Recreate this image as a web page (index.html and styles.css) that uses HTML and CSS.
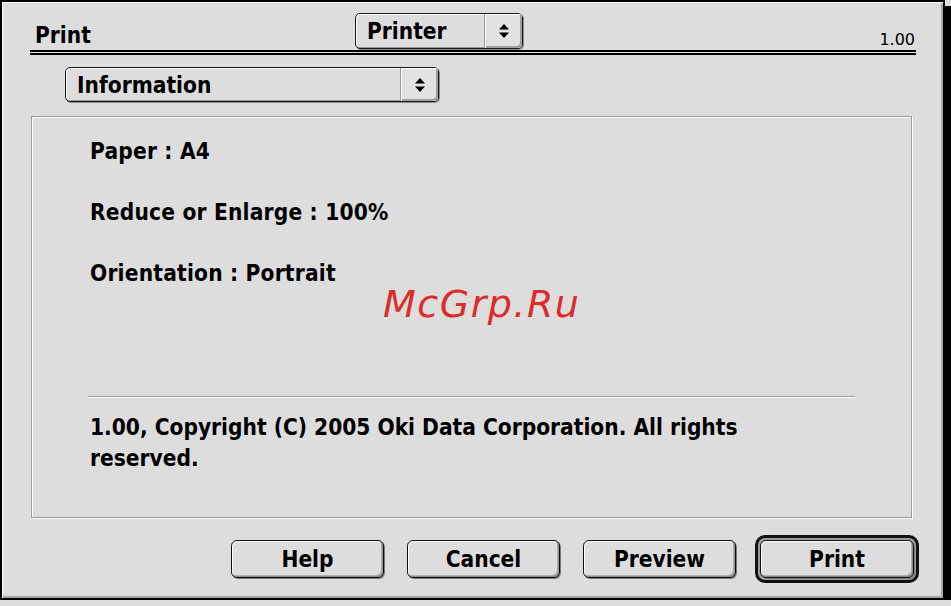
FILE: index.html
```html
<!DOCTYPE html>
<html lang="en">
<head>
    <meta charset="UTF-8">
    <meta name="viewport" content="width=device-width, initial-scale=1.0">
    <title>Print - Information</title>
    <link rel="stylesheet" href="styles.css">
</head>
<body>
    <div class="window">
        <!-- Title row with printer popup -->
        <div class="title-bar">
            <span class="title">Print</span>
            <div class="popup popup-printer">
                <span class="popup-label">Printer</span>
                <span class="popup-arrows">
                    <svg width="10" height="16" viewBox="0 0 10 16"><path d="M0 6.5 L5 1 L10 6.5 Z M0 9.5 L5 15 L10 9.5 Z" fill="#000"/></svg>
                </span>
            </div>
            <span class="version">1.00</span>
        </div>

        <!-- Panel selector -->
        <div class="popup popup-panel">
            <span class="popup-label">Information</span>
            <span class="popup-arrows">
                <svg width="10" height="16" viewBox="0 0 10 16"><path d="M0 6.5 L5 1 L10 6.5 Z M0 9.5 L5 15 L10 9.5 Z" fill="#000"/></svg>
            </span>
        </div>

        <!-- Information group -->
        <div class="group">
            <p class="info-line">Paper : A4</p>
            <p class="info-line">Reduce or Enlarge : 100%</p>
            <p class="info-line">Orientation : Portrait</p>
            <hr class="separator">
            <p class="copyright">1.00, Copyright (C) 2005 Oki Data Corporation. All rights reserved.</p>
        </div>

        <!-- Dialog buttons -->
        <div class="buttons">
            <button class="btn">Help</button>
            <button class="btn">Cancel</button>
            <button class="btn">Preview</button>
            <span class="default-ring"><button class="btn btn-default">Print</button></span>
        </div>

        <div class="watermark">McGrp.Ru</div>
    </div>
</body>
</html>
```

FILE: styles.css
```css
body {
    margin: 0;
    background-color: #dddddd;
    font-family: "DejaVu Sans Condensed", "DejaVu Sans", sans-serif;
    color: #000;
}

.window {
    position: relative;
    box-sizing: border-box;
    width: 945px;
    height: 600px;
    padding: 11px 27px 0 28px;
    background-color: #dddddd;
    border: 2px solid #000;
    box-shadow: 6px 6px 0 #000, inset 1px 1px 0 #fff, inset -2px -2px 0 #a6a6a6;
}

/* title row */
.title-bar {
    display: flex;
    align-items: flex-end;
    height: 37px;
    border-bottom: 2px solid #000;
    box-shadow: 0 1px 0 #dddddd, 0 3px 0 #000;
}

.title {
    width: 320px;
    padding: 0 0 4px 5px;
    font-size: 22.5px;
    font-weight: bold;
    line-height: 1;
}

.version {
    margin-left: auto;
    padding: 0 1px 2px 0;
    font-family: "DejaVu Sans", sans-serif;
    font-size: 16px;
    line-height: 1;
}

/* popup menus */
.popup {
    display: flex;
    box-sizing: border-box;
    background-color: #dddddd;
    border: 1px solid #1a1a1a;
    border-radius: 5px;
    box-shadow: 1px 1px 0 #8a8a8a, inset 1px 1px 0 #fff, inset -1px -1px 0 #9a9a9a;
}

.popup-printer {
    width: 168px;
    height: 36px;
    margin-bottom: 1px;
}

.popup-panel {
    width: 374px;
    height: 35px;
    margin: 15px 0 0 35px;
}

.popup-label {
    flex: 1;
    display: flex;
    align-items: center;
    padding-left: 11px;
    font-size: 22.5px;
    font-weight: bold;
}

.popup-arrows {
    display: flex;
    align-items: center;
    justify-content: center;
    width: 37px;
    border-left: 1px solid #9a9a9a;
    border-radius: 0 4px 4px 0;
    background-color: #e2e2e2;
    box-shadow: inset 1px 1px 0 #fff, inset -2px -2px 0 #a0a0a0;
}

/* group box */
.group {
    box-sizing: border-box;
    width: 881px;
    height: 402px;
    margin: 14px 0 0 1px;
    padding: 23px 0 0 58px;
    border: 1px solid #9a9a9a;
    box-shadow: 1px 1px 0 #fff, inset 1px 1px 0 #fff;
}

.info-line {
    margin: 0 0 39px;
    font-size: 22.5px;
    font-weight: bold;
    line-height: 22px;
    letter-spacing: 0.2px;
}

.separator {
    width: 767px;
    height: 0;
    margin: 112px 0 0 -2px;
    border: none;
    border-top: 1px solid #9a9a9a;
    border-bottom: 1px solid #fff;
}

.copyright {
    max-width: 720px;
    margin: 14px 0 0;
    font-size: 22.5px;
    font-weight: bold;
    line-height: 31px;
}

/* buttons */
.buttons {
    display: flex;
    justify-content: flex-end;
    align-items: center;
    gap: 23px;
    margin: 17px -3px 0 0;
}

.btn {
    box-sizing: border-box;
    width: 153px;
    height: 38px;
    padding: 0;
    font-family: inherit;
    font-size: 22.5px;
    font-weight: bold;
    color: #000;
    background-color: #dddddd;
    border: 1px solid #111;
    border-radius: 6px;
    box-shadow: 1px 1px 0 #7a7a7a, inset 1px 1px 0 #fff, inset -1px -1px 0 #8a8a8a, inset -2px -2px 0 #b0b0b0;
}

.default-ring {
    display: flex;
    margin-left: -4px;
    padding: 2px;
    background-color: #9c9c9c;
    border: 3px solid #111;
    border-radius: 10px;
}

.btn-default {
    width: 154px;
}

.watermark {
    position: absolute;
    left: 381px;
    top: 283px;
    font-family: "DejaVu Sans", sans-serif;
    font-style: oblique;
    font-size: 38px;
    letter-spacing: 1.5px;
    line-height: 1;
    color: #dd2b2b;
}
```
